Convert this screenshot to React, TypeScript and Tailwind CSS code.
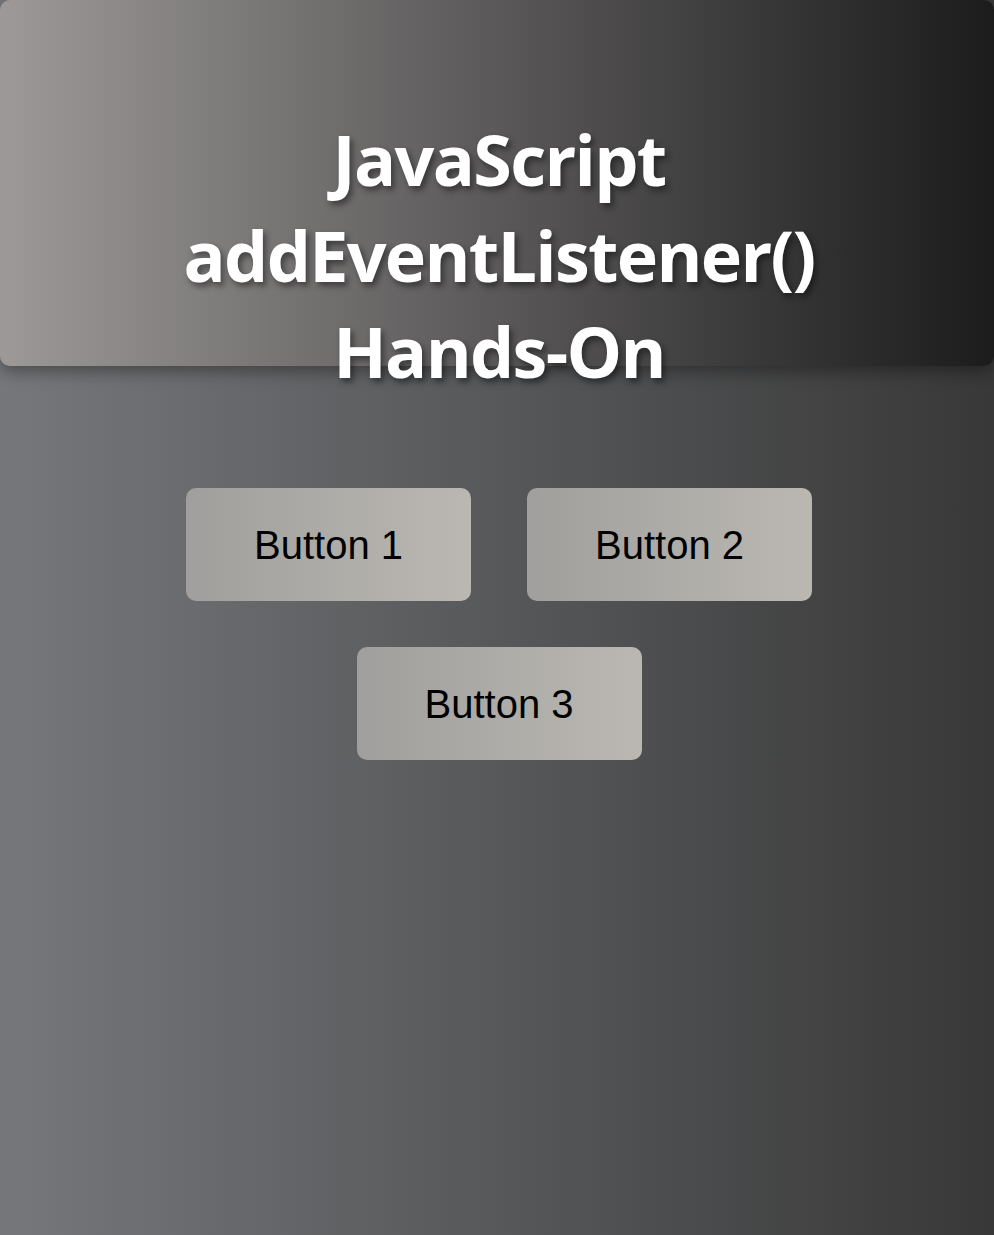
import React from "react";

export default function App() {
  return (
    <div className="min-h-screen w-full bg-[linear-gradient(to_right,#76777a,#57585a_50%,#383838)]">
      <header className="h-[366px] w-full rounded-[10px] bg-[linear-gradient(to_right,#9c9998,#5a5858_50%,#1c1c1c)] shadow-[0_6px_16px_rgba(0,0,0,0.35)] pt-[111px] pl-[4px]">
        <h1
          className="text-center text-[70px] leading-[96px] font-bold text-white tracking-[-1.7px] [text-shadow:3px_4px_6px_rgba(0,0,0,0.45)]"
          style={{ fontFamily: '"Open Sans", "Noto Sans", sans-serif' }}
        >
          JavaScript
          <br />
          addEventListener()
          <br />
          Hands-On
        </h1>
      </header>
      <div className="pl-[4px]">
        <div className="mt-[122px] mx-auto w-[626px] flex flex-wrap justify-center gap-x-[56px] gap-y-[46px]">
          {["Button 1", "Button 2", "Button 3"].map((b) => (
            <button
              key={b}
              className="w-[285px] h-[113px] rounded-[10px] bg-[linear-gradient(to_right,#a09f9d,#bbb8b2)] text-black text-[40px] flex items-center justify-center"
              style={{ fontFamily: '"Liberation Sans", Arial, sans-serif' }}
            >
              {b}
            </button>
          ))}
        </div>
      </div>
    </div>
  );
}
